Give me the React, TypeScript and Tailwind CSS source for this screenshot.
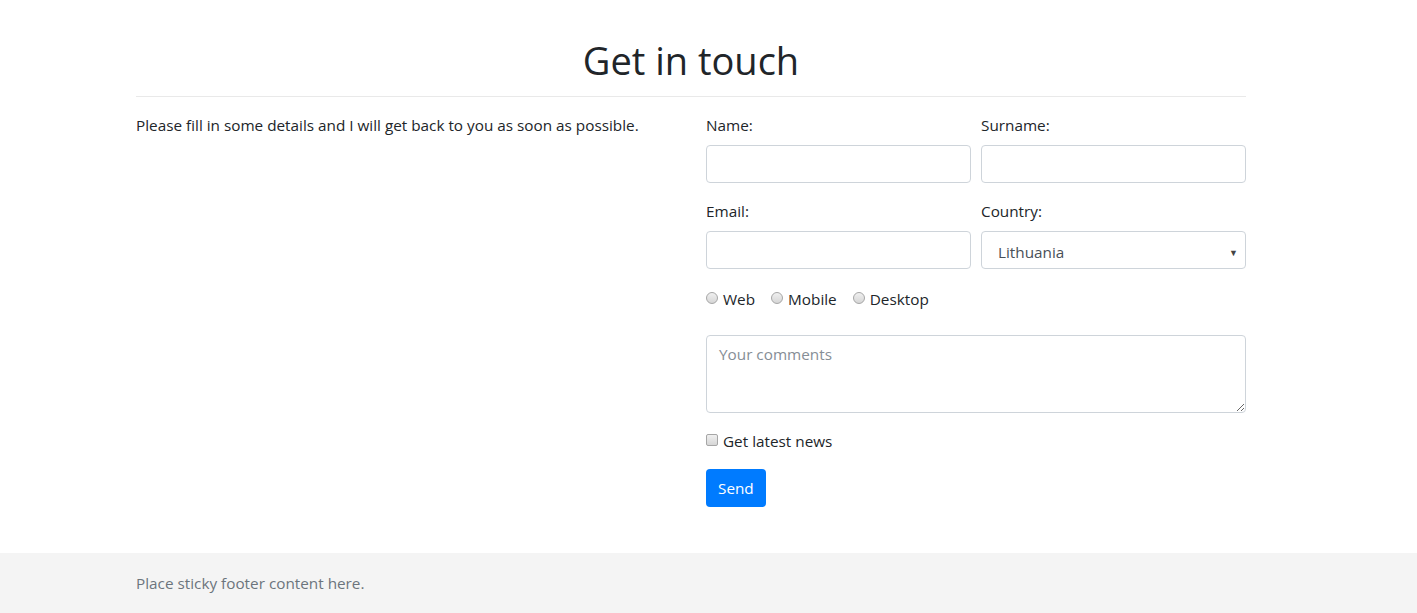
import { useState } from 'react';

function Radio({ label }: { label: string }) {
  return (
    <label className="inline-flex items-center mr-4">
      <input
        type="radio"
        name="platform"
        className="appearance-none w-[12px] h-[12px] rounded-full border border-[#a6a6a6] bg-gradient-to-b from-[#f0f0f0] to-[#d6d6d6] mr-[5px] mt-[-3px]"
      />
      <span>{label}</span>
    </label>
  );
}

export default function App() {
  const [country, setCountry] = useState('Lithuania');

  return (
    <div className="min-h-screen flex flex-col bg-white text-[#212529] font-['Open_Sans',sans-serif] text-[15.3px] leading-6">
      <div className="pr-[35px]">
        <main className="w-[1140px] mx-auto px-[15px]">
          <h1 className="text-center text-[38px] leading-[48px] mt-[36px] mb-0 font-normal">Get in touch</h1>
          <hr className="border-0 border-t border-[#e9e9e9] mt-3 mb-4" />

          <div className="flex -mx-[15px]">
            {/* Intro */}
            <div className="w-1/2 px-[15px]">
              <p>Please fill in some details and I will get back to you as soon as possible.</p>
            </div>

            {/* Form */}
            <div className="w-1/2 px-[15px]">
              <form>
                <div className="flex -mx-[5px]">
                  <div className="w-1/2 px-[5px] mb-4">
                    <label className="block mb-2">Name:</label>
                    <input className="block w-full h-[38px] border border-[#ced4da] rounded px-3 text-[#495057]" />
                  </div>
                  <div className="w-1/2 px-[5px] mb-4">
                    <label className="block mb-2">Surname:</label>
                    <input className="block w-full h-[38px] border border-[#ced4da] rounded px-3 text-[#495057]" />
                  </div>
                </div>
                <div className="flex -mx-[5px]">
                  <div className="w-1/2 px-[5px] mb-4">
                    <label className="block mb-2">Email:</label>
                    <input type="email" className="block w-full h-[38px] border border-[#ced4da] rounded px-3 text-[#495057]" />
                  </div>
                  <div className="w-1/2 px-[5px] mb-4">
                    <label className="block mb-2">Country:</label>
                    <div className="relative">
                      <select
                        value={country}
                        onChange={(e) => setCountry(e.target.value)}
                        className="appearance-none block w-full h-[38px] border border-[#ced4da] rounded pl-4 pr-6 pt-1 text-[#495057] bg-white"
                      >
                        <option>Lithuania</option>
                        <option>Latvia</option>
                        <option>Estonia</option>
                      </select>
                      <span className="absolute right-[8px] top-[10px] text-[9px] text-[#444] pointer-events-none">▼</span>
                    </div>
                  </div>
                </div>

                <div className="flex items-center pt-[2px] mb-6">
                  <Radio label="Web" />
                  <Radio label="Mobile" />
                  <Radio label="Desktop" />
                </div>

                <textarea
                  placeholder="Your comments"
                  className="block w-full h-[78px] border border-[#ced4da] rounded px-3 py-[6px] placeholder:text-[#868e96] mb-4"
                />

                <label className="flex items-center mb-4">
                  <input
                    type="checkbox"
                    className="appearance-none w-[12px] h-[12px] rounded-[2px] border border-[#a6a6a6] bg-gradient-to-b from-[#f0f0f0] to-[#d6d6d6] mr-[5px] mt-[-3px]"
                  />
                  <span>Get latest news</span>
                </label>

                <button type="button" className="h-[38px] px-3 rounded bg-[#007bff] text-white">
                  Send
                </button>
              </form>
            </div>
          </div>
        </main>
      </div>

      <footer className="mt-auto h-[60px] bg-[#f4f4f4] flex items-center pr-[35px]">
        <div className="w-[1140px] mx-auto px-[15px] text-[#6c757d]">Place sticky footer content here.</div>
      </footer>
    </div>
  );
}
